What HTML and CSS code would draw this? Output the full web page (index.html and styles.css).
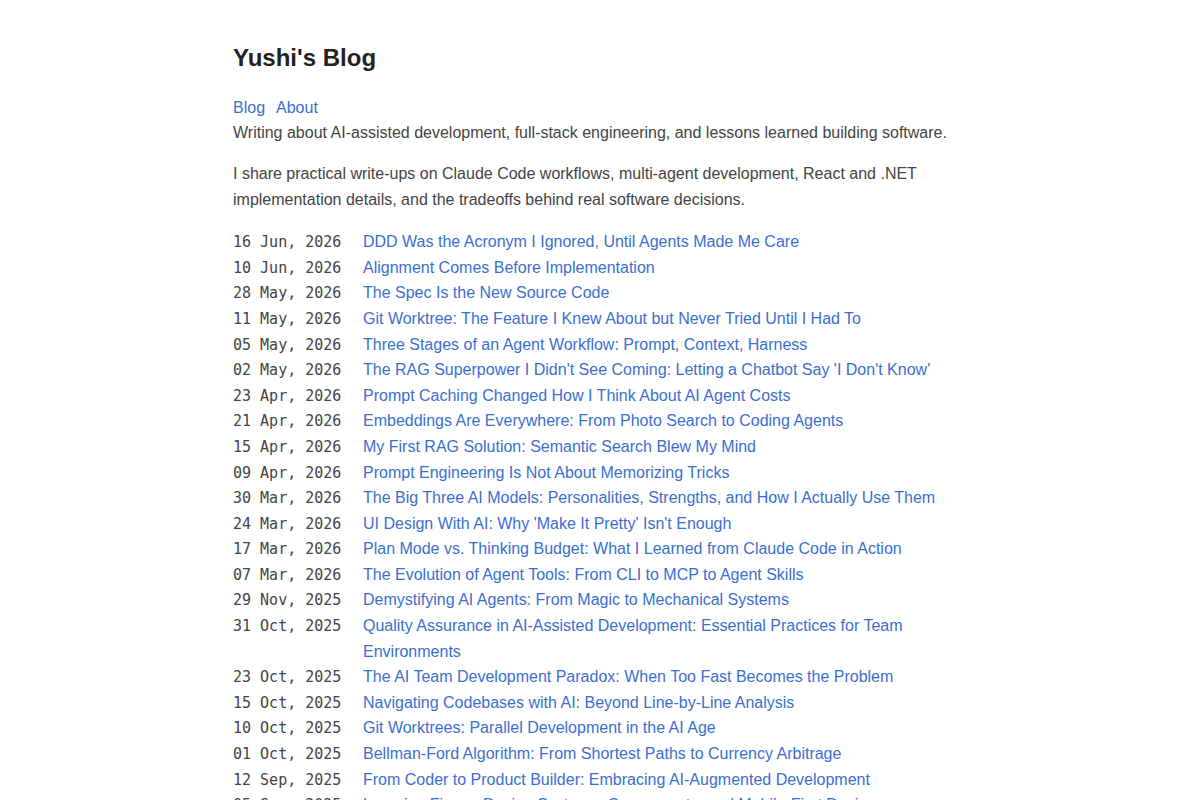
FILE: index.html
```html
<!DOCTYPE html>
<html lang="en">
<head>
<meta charset="UTF-8">
<meta name="viewport" content="width=device-width,initial-scale=1.0">
<title>Yushi's Blog</title>
<link rel="stylesheet" href="styles.css">
</head>
<body>
<main class="page">
  <h1 class="site-title">Yushi's Blog</h1>

  <nav class="site-nav">
    <a href="#">Blog</a>
    <a href="#">About</a>
  </nav>
  <p class="tagline">Writing about AI-assisted development, full-stack engineering, and lessons learned building software.</p>

  <p class="intro">I share practical write-ups on Claude Code workflows, multi-agent development, React and .NET implementation details, and the tradeoffs behind real software decisions.</p>

  <!-- post list, newest first -->
  <ul class="posts">
    <li><time>16 Jun, 2026</time><a href="#">DDD Was the Acronym I Ignored, Until Agents Made Me Care</a></li>
    <li><time>10 Jun, 2026</time><a href="#">Alignment Comes Before Implementation</a></li>
    <li><time>28 May, 2026</time><a href="#">The Spec Is the New Source Code</a></li>
    <li><time>11 May, 2026</time><a href="#">Git Worktree: The Feature I Knew About but Never Tried Until I Had To</a></li>
    <li><time>05 May, 2026</time><a href="#">Three Stages of an Agent Workflow: Prompt, Context, Harness</a></li>
    <li><time>02 May, 2026</time><a href="#">The RAG Superpower I Didn't See Coming: Letting a Chatbot Say 'I Don't Know'</a></li>
    <li><time>23 Apr, 2026</time><a href="#">Prompt Caching Changed How I Think About AI Agent Costs</a></li>
    <li><time>21 Apr, 2026</time><a href="#">Embeddings Are Everywhere: From Photo Search to Coding Agents</a></li>
    <li><time>15 Apr, 2026</time><a href="#">My First RAG Solution: Semantic Search Blew My Mind</a></li>
    <li><time>09 Apr, 2026</time><a href="#">Prompt Engineering Is Not About Memorizing Tricks</a></li>
    <li><time>30 Mar, 2026</time><a href="#">The Big Three AI Models: Personalities, Strengths, and How I Actually Use Them</a></li>
    <li><time>24 Mar, 2026</time><a href="#">UI Design With AI: Why 'Make It Pretty' Isn't Enough</a></li>
    <li><time>17 Mar, 2026</time><a href="#">Plan Mode vs. Thinking Budget: What I Learned from Claude Code in Action</a></li>
    <li><time>07 Mar, 2026</time><a href="#">The Evolution of Agent Tools: From CLI to MCP to Agent Skills</a></li>
    <li><time>29 Nov, 2025</time><a href="#">Demystifying AI Agents: From Magic to Mechanical Systems</a></li>
    <li><time>31 Oct, 2025</time><a href="#">Quality Assurance in AI-Assisted Development: Essential Practices for Team Environments</a></li>
    <li><time>23 Oct, 2025</time><a href="#">The AI Team Development Paradox: When Too Fast Becomes the Problem</a></li>
    <li><time>15 Oct, 2025</time><a href="#">Navigating Codebases with AI: Beyond Line-by-Line Analysis</a></li>
    <li><time>10 Oct, 2025</time><a href="#">Git Worktrees: Parallel Development in the AI Age</a></li>
    <li><time>01 Oct, 2025</time><a href="#">Bellman-Ford Algorithm: From Shortest Paths to Currency Arbitrage</a></li>
    <li><time>12 Sep, 2025</time><a href="#">From Coder to Product Builder: Embracing AI-Augmented Development</a></li>
    <li><time>05 Sep, 2025</time><a href="#">Learning Figma: Design Systems, Components, and Mobile-First Design</a></li>
  </ul>
</main>
</body>
</html>
```

FILE: styles.css
```css
/* ==== base ==== */
*{box-sizing:border-box}
body{
  margin:0;
  background:#fff;
  color:#444;
  font-family:"Liberation Sans", Arial, sans-serif;
  font-size:16px;
  line-height:1.6;
}
a{color:#3a6fd2;text-decoration:none}
a:hover{text-decoration:underline}

.page{width:734px;margin:0 auto;padding:44px 0 40px}

/* ==== header ==== */
.site-title{
  margin:0 0 22px;
  font-size:24px;line-height:1.2;
  color:#222;
}
.site-nav{display:flex;gap:11px}
.tagline{margin:0}
.intro{margin:15px 0 17px}

/* ==== post list ==== */
.posts{list-style:none;margin:0;padding:0}
.posts li{display:flex;align-items:baseline}
.posts time{
  flex:none;width:108px;margin-right:22px;
  white-space:nowrap;
  font-family:"DejaVu Sans Mono", monospace;
  font-size:15px;
  color:#444;
}
```
